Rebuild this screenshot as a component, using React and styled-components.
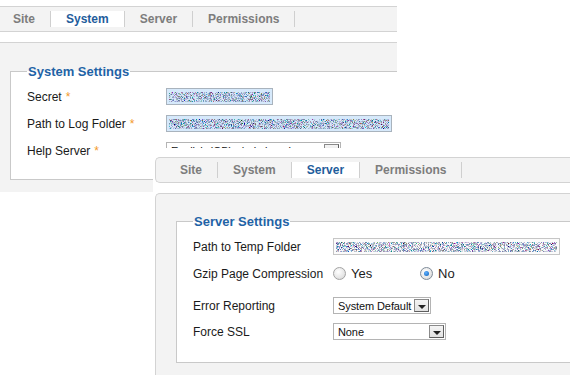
import React from 'react';
import styled, { createGlobalStyle } from 'styled-components';

const Global = createGlobalStyle`
  html, body { margin: 0; padding: 0; background: #fff; }
  body { font-family: "Liberation Sans", Arial, sans-serif; }
  * { box-sizing: border-box; }
`;

const Canvas = styled.div`
  position: relative;
  width: 572px;
  height: 375px;
  overflow: hidden;
  background: #fff;
`;

const Window = styled.div`
  position: absolute;
  left: ${p => p.$x}px;
  top: ${p => p.$y}px;
  width: ${p => p.$w}px;
  height: ${p => p.$h}px;
  padding: ${p => p.$pad};
  overflow: hidden;
  background: #fff;
  display: flex;
  flex-direction: column;
`;

const TabBar = styled.div`
  flex-shrink: 0;
  display: flex;
  align-items: center;
  width: ${p => p.$w}px;
  height: 26px;
  margin-left: ${p => p.$shift || 0}px;
  background: #f3f3f3;
  border-top: 1px solid #d3d3d3;
  border-bottom: 1px solid #d3d3d3;
  border-left: ${p => (p.$rounded ? '1px solid #d3d3d3' : 'none')};
  border-radius: ${p => (p.$rounded ? '5px 0 0 5px' : '0')};
  padding-left: ${p => p.$indent}px;
`;

const Tab = styled.div`
  height: 16px;
  display: flex;
  align-items: center;
  padding: 0 15px 0 15px;
  border-right: 1px solid #cfcfcf;
  background: ${p => (p.$active ? '#fff' : 'transparent')};
  color: ${p => (p.$active ? '#1f5d9c' : '#7d7d7d')};
  font-weight: bold;
  font-size: 12px;
  white-space: nowrap;
`;

const Panel = styled.div`
  flex-shrink: 0;
  margin-top: 10px;
  width: ${p => p.$w}px;
  flex-grow: ${p => (p.$grow ? 1 : 0)};
  background: #f3f3f3;
  border-top: 1px solid #d3d3d3;
  border-left: ${p => (p.$rounded ? '1px solid #d3d3d3' : 'none')};
  border-radius: ${p => (p.$rounded ? '5px 0 0 0' : '0')};
  padding: ${p => p.$pad};
  overflow: hidden;
`;

const Fieldset = styled.fieldset`
  margin: ${p => p.$mt}px 0 0 ${p => p.$ml}px;
  width: 460px;
  border: 1px solid #c9c9c9;
  background: #fff;
  padding: 9px 0 ${p => p.$pb}px 16px;
  min-width: 0;
`;

const Legend = styled.legend`
  padding: 0 1px;
  color: #1f63a6;
  font-weight: bold;
  font-size: 13px;
  line-height: 15px;
`;

const Row = styled.div`
  display: flex;
  align-items: center;
  height: 17px;
  margin-top: ${p => p.$mt}px;
`;

const Label = styled.label`
  width: ${p => p.$w}px;
  flex-shrink: 0;
  font-size: 12px;
  color: #1a1a1a;
  white-space: nowrap;
`;

const Star = styled.span`
  color: #f39a2c;
  margin-left: 4px;
`;

const NoiseField = styled.div`
  width: ${p => p.$w}px;
  height: 17px;
  border: 1px solid ${p => (p.$blue ? '#a9b3bd' : '#c6c6c6')};
  background: ${p => (p.$blue ? '#d6e9fb' : '#fbfbfb')};
  padding: 3px 2px 2px 2px;
  display: flex;
  align-items: center;
  svg { display: block; }
`;

const Noise = ({ id, seed, w, blue }) => (
  <NoiseField $w={w} $blue={blue}>
    <svg width={w - 6} height="10" viewBox={`0 0 ${w - 6} 10`}>
      <filter id={id} x="0" y="0" width="100%" height="100%">
        <feTurbulence type="fractalNoise" baseFrequency="1.1 1.3" numOctaves="2" seed={seed} />
        <feColorMatrix
          type="matrix"
          values="1.3 0.2 0.1 0 -0.55
                  0.2 1.1 0.3 0 -0.5
                  0.1 0.3 1.3 0 -0.4
                  0 0 0 6 -2.5"
        />
      </filter>
      <rect width={w - 6} height="10" filter={`url(#${id})`} />
    </svg>
  </NoiseField>
);

const Select = styled.div`
  width: ${p => p.$w}px;
  height: 17px;
  border: 1px solid #b4b4b4;
  background: #fff;
  display: flex;
  align-items: stretch;
  font-size: 11px;
  color: #111;
`;

const SelectText = styled.span`
  flex: 1;
  min-width: 0;
  padding-left: 4px;
  display: flex;
  align-items: center;
  white-space: nowrap;
  overflow: hidden;
  letter-spacing: -0.1px;
`;

const DropButton = styled.span`
  flex-shrink: 0;
  width: 15px;
  margin: 1px;
  border: 1px solid #8a8a8a;
  border-right-color: #5e5e5e;
  border-bottom-color: #5e5e5e;
  background: linear-gradient(#f4f4f4, #e2e2e2);
  display: flex;
  align-items: center;
  justify-content: center;
  &::after {
    content: '';
    margin-top: 2px;
    border-left: 4px solid transparent;
    border-right: 4px solid transparent;
    border-top: 4px solid #222;
  }
`;

const Radios = styled.div`
  display: flex;
  align-items: center;
`;

const RadioOption = styled.span`
  display: flex;
  align-items: center;
  width: ${p => p.$w}px;
  font-size: 13px;
  color: #1d1d1d;
  gap: 5px;
`;

const RadioDot = styled.span`
  width: 13px;
  height: 13px;
  border-radius: 50%;
  border: 1px solid ${p => (p.$on ? '#7e8b99' : '#a3a3a3')};
  background: radial-gradient(circle at 40% 35%, #ffffff 0%, #e6e6e6 60%, #cfcfcf 100%);
  display: flex;
  align-items: center;
  justify-content: center;
  &::after {
    content: '';
    display: ${p => (p.$on ? 'block' : 'none')};
    width: 5px;
    height: 5px;
    border-radius: 50%;
    background: radial-gradient(circle at 40% 35%, #5fb0ff, #0b5fb8);
  }
`;

const tabs = ['Site', 'System', 'Server', 'Permissions'];

export default function App() {
  return (
    <Canvas>
      <Global />
      <Window $x={0} $y={0} $w={397} $h={196} $pad="6px 0 0 0">
        <TabBar $w={420} $indent={0} $shift={-2}>
          {tabs.map(t => (
            <Tab key={t} $active={t === 'System'}>{t}</Tab>
          ))}
        </TabBar>
        <Panel $w={420} $pad="0 0 12px 0">
          <Fieldset $mt={21} $ml={10} $pb={20}>
            <Legend>System Settings</Legend>
            <Row $mt={0}>
              <Label $w={139}>Secret<Star>*</Star></Label>
              <Noise id="n1" seed={3} w={107} blue />
            </Row>
            <Row $mt={10}>
              <Label $w={139}>Path to Log Folder<Star>*</Star></Label>
              <Noise id="n2" seed={7} w={226} blue />
            </Row>
            <Row $mt={10}>
              <Label $w={139}>Help Server<Star>*</Star></Label>
              <Select $w={175}>
                <SelectText>English (GB) - help.joomla.org</SelectText>
                <DropButton />
              </Select>
            </Row>
          </Fieldset>
        </Panel>
      </Window>

      <Window $x={153} $y={148} $w={419} $h={227} $pad="9px 0 0 2px">
        <TabBar $w={415} $rounded $indent={9}>
          {tabs.map(t => (
            <Tab key={t} $active={t === 'Server'}>{t}</Tab>
          ))}
        </TabBar>
        <Panel $w={415} $rounded $grow $pad="0 0 12px 0">
          <Fieldset $mt={20} $ml={20} $pb={22}>
            <Legend>Server Settings</Legend>
            <Row $mt={0}>
              <Label $w={140}>Path to Temp Folder</Label>
              <Noise id="n3" seed={11} w={227} />
            </Row>
            <Row $mt={10}>
              <Label $w={140}>Gzip Page Compression</Label>
              <Radios>
                <RadioOption $w={87}><RadioDot />Yes</RadioOption>
                <RadioOption $w={40}><RadioDot $on />No</RadioOption>
              </Radios>
            </Row>
            <Row $mt={15}>
              <Label $w={140}>Error Reporting</Label>
              <Select $w={98}>
                <SelectText>System Default</SelectText>
                <DropButton />
              </Select>
            </Row>
            <Row $mt={9}>
              <Label $w={140}>Force SSL</Label>
              <Select $w={113}>
                <SelectText>None</SelectText>
                <DropButton />
              </Select>
            </Row>
          </Fieldset>
        </Panel>
      </Window>
    </Canvas>
  );
}
